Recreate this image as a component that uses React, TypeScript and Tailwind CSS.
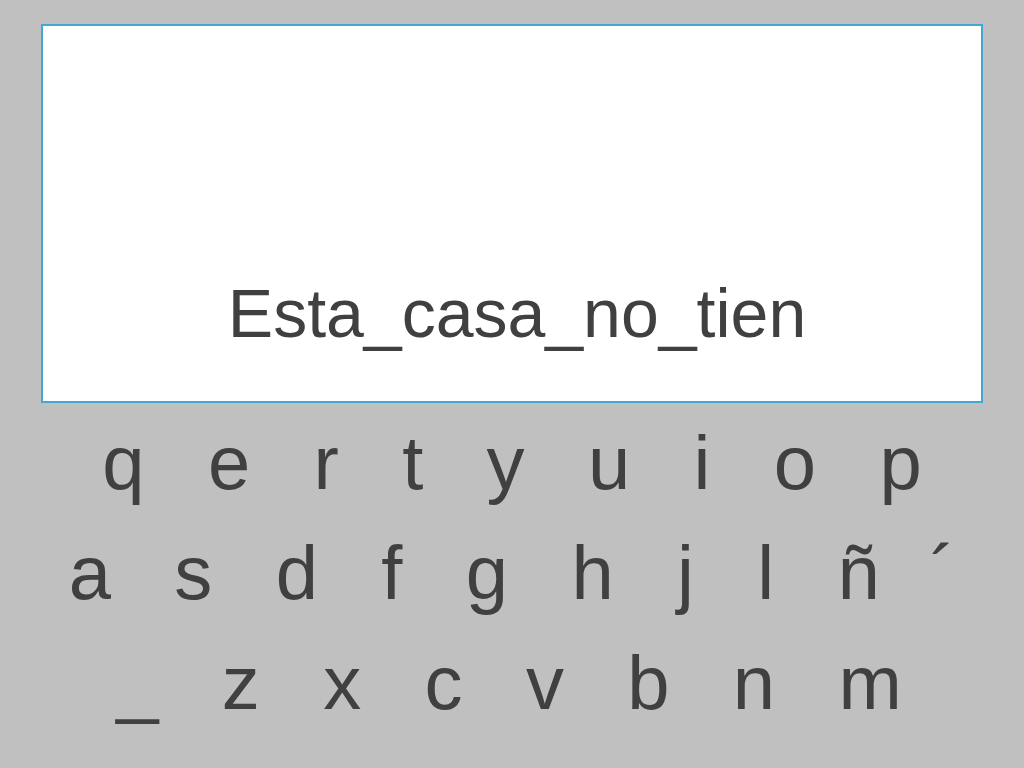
import React from 'react';

const App: React.FC = () => {
  return (
    <div className="w-[1024px] h-[768px] bg-[#c0c0c0] overflow-hidden font-['Liberation_Sans',Arial,sans-serif] text-[#404040]">
      {/* text display */}
      <div className="ml-[41px] mt-[24px] w-[942px] h-[379px] bg-white border-2 border-[#45a5d5] flex items-end justify-center pb-[54px] pl-[10px]">
        <span className="text-[68px] leading-none whitespace-pre">Esta_casa_no_tien</span>
      </div>

      {/* keyboard */}
      <div className="mt-[22px] flex flex-col gap-[34px] text-center text-[76px] leading-none whitespace-pre">
        <div>{'q   e   r   t   y   u   i   o   p'}</div>
        <div>
          {'a   s   d   f   g   h   j   l   ñ  '}
          <span className="ml-[8px]">´</span>
        </div>
        <div className="pr-[6px]">{'_   z   x   c   v   b   n   m'}</div>
      </div>
    </div>
  );
};

export default App;
